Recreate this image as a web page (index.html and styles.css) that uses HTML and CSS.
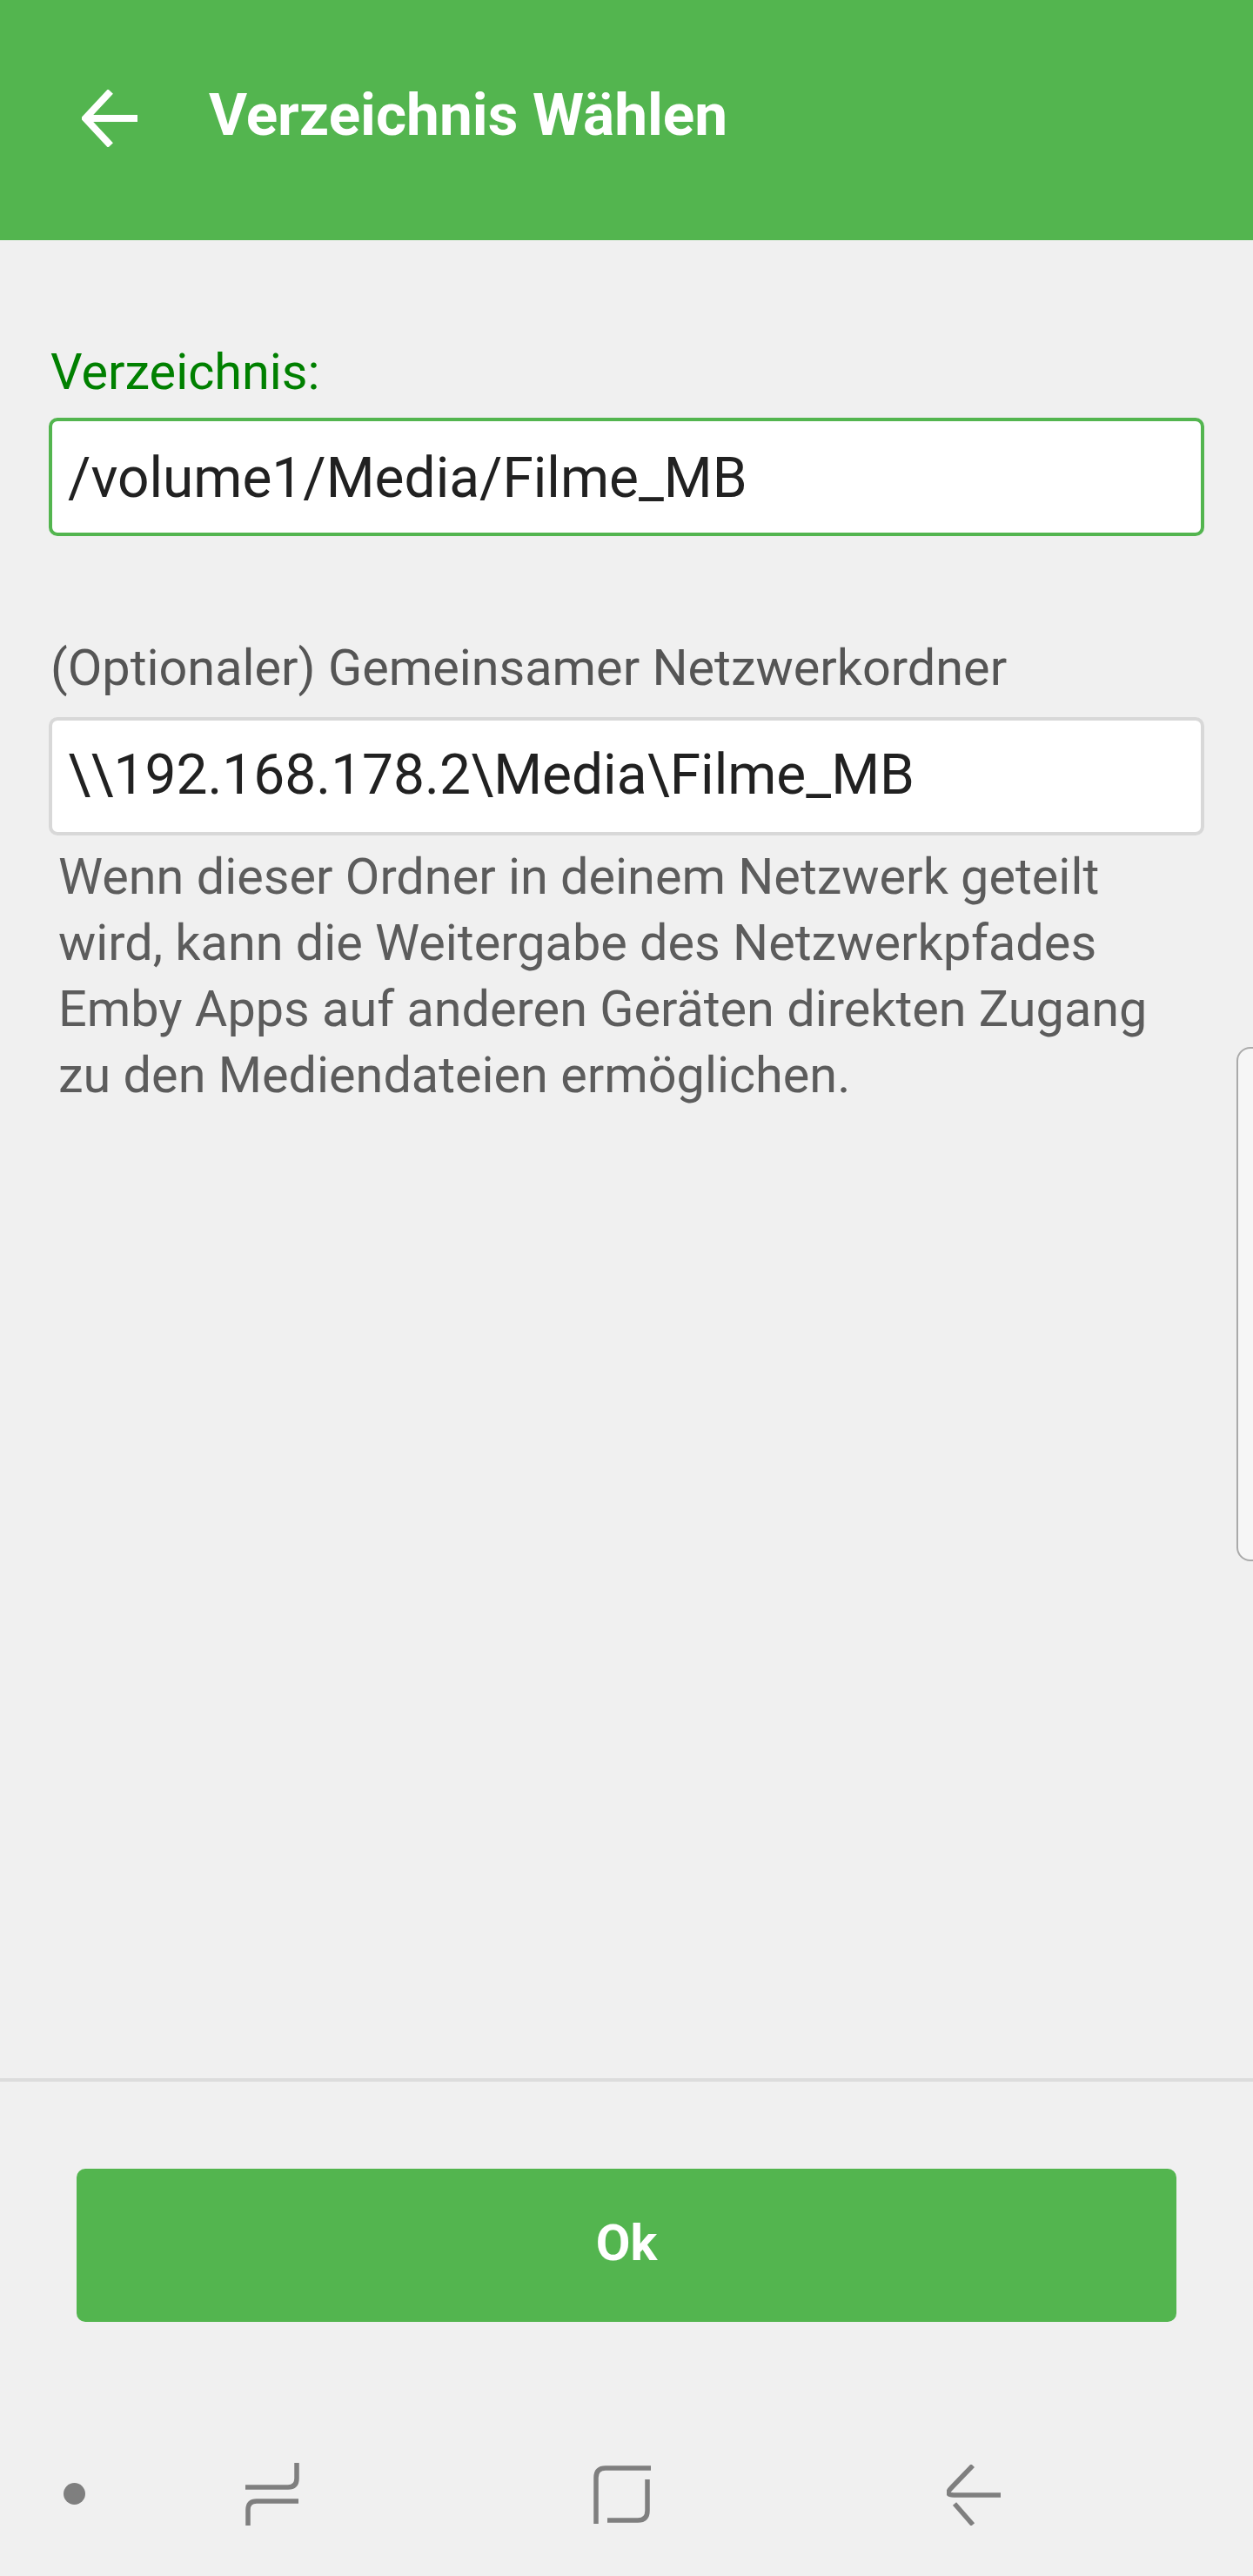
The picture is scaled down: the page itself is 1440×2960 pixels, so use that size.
FILE: index.html
```html
<!DOCTYPE html>
<html lang="de">
<head>
<meta charset="utf-8">
<title>Verzeichnis Wählen</title>
<link rel="stylesheet" href="styles.css">
</head>
<body>
<div class="screen">
  <header class="appbar">
    <svg class="appbar-back" width="64" height="66" viewBox="0 0 64 66" fill="none" stroke="#fff" stroke-width="8"><path d="M64 33H5"/><path d="M33 2L4 33l29 31" stroke-linejoin="miter"/></svg>
    <h1 class="appbar-title">Verzeichnis Wählen</h1>
  </header>
  <main class="content">
    <div class="field">
      <label class="field-label field-label-active">Verzeichnis:</label>
      <div class="input input-active">/volume1/Media/Filme_MB</div>
    </div>
    <div class="field field-second">
      <label class="field-label">(Optionaler) Gemeinsamer Netzwerkordner</label>
      <div class="input">\\192.168.178.2\Media\Filme_MB</div>
      <p class="help">Wenn dieser Ordner in deinem Netzwerk geteilt wird, kann die Weitergabe des Netzwerkpfades Emby Apps auf anderen Geräten direkten Zugang zu den Mediendateien ermöglichen.</p>
    </div>
  </main>
  <footer class="actions">
    <button class="ok">Ok</button>
  </footer>
  <nav class="sysnav">
    <span class="nav-dot"></span>
    <svg class="nav-recents" width="62" height="72" viewBox="0 0 62 72" fill="none" stroke="#7f7f7f" stroke-width="5.5"><path d="M59 0V18Q59 28 49 28H0" /><path d="M61 44H13Q3 44 3 54V72"/></svg>
    <svg class="nav-home" width="66" height="68" viewBox="0 0 66 68" fill="none" stroke="#7f7f7f" stroke-width="5.5"><path d="M66 4H14Q3 4 3 15V68"/><path d="M62 17V53Q62 64 51 64H16"/></svg>
    <svg class="nav-back" width="62" height="70" viewBox="0 0 62 70" fill="none" stroke="#7f7f7f" stroke-width="5.5"><path d="M30 1L6 26Q-3 35 8 35H62"/><path d="M9 45L30 69"/></svg>
  </nav>
  <div class="edge-panel"></div>
</div>
</body>
</html>
```
FILE: styles.css
```css
* { box-sizing: border-box; }
html, body { margin: 0; padding: 0; }
body { font-family: Roboto, "Noto Sans", sans-serif; background: #f0f0f0; }
.screen { position: relative; width: 1440px; height: 2960px; display: flex; flex-direction: column; overflow: hidden; background: #f0f0f0; }
.appbar { height: 276px; background: #53b54f; display: flex; align-items: flex-start; flex: none; padding: 103px 0 0 94px; }
.appbar-back { flex: none; }
.appbar-title { margin: -11px 0 0 82px; font-size: 67.5px; line-height: 80px; font-weight: 700; color: #fff; }
.content { flex: 1; padding: 118px 56px 0 56px; border-bottom: 4px solid #dcdcdc; }
.field-label { display: block; font-size: 57.6px; line-height: 68px; color: #008000; margin-left: 2px; }
.field-second { margin-top: 118px; }
.field-second .field-label { color: #555; margin-bottom: 22px; }
.input { margin-top: 18px; width: 1328px; height: 136px; background: #fff; border: 4px solid #d8d8d8; border-radius: 10px; padding: 0 18px 3px; display: flex; align-items: center; font-size: 64px; color: #212121; }
.field-second .input { margin-top: 0; }
.input-active { border-color: #53b54f; padding: 3px 18px 0; }
.help { margin: 10px 0 0 11px; font-size: 57.6px; line-height: 76px; color: #5c5c5c; width: 1300px; }
.actions { height: 420px; flex: none; padding: 100px 88px 0; }
.ok { display: block; width: 100%; height: 176px; border: 0; border-radius: 10px; padding: 0 0 5px; background: #53b54f; color: #fff; font: 700 57.6px Roboto, sans-serif; }
.sysnav { position: relative; height: 148px; flex: none; }
.nav-dot { position: absolute; left: 73px; top: 41px; width: 25px; height: 25px; border-radius: 50%; background: #7f7f7f; }
.nav-recents { position: absolute; left: 282px; top: 18px; }
.nav-home { position: absolute; left: 682px; top: 20px; }
.nav-back { position: absolute; left: 1088px; top: 20px; }
.edge-panel { position: absolute; left: 1421px; top: 1203px; width: 40px; height: 591px; background: #f6f6f6; border: 2px solid #aaa; border-radius: 16px; }
```
